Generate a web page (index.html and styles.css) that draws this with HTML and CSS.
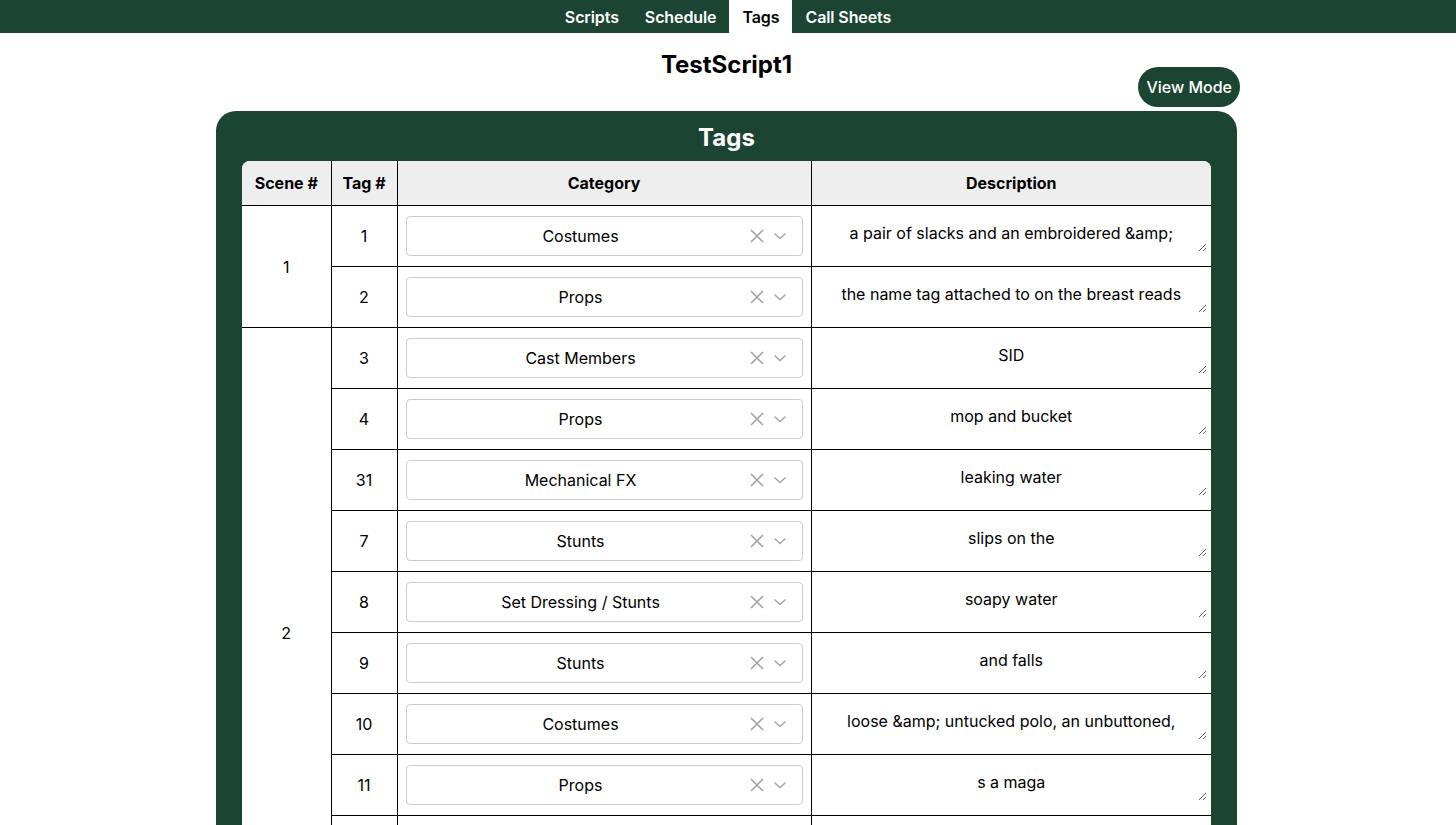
FILE: index.html
```html
<!DOCTYPE html>
<html lang="en">
<head>
<meta charset="utf-8">
<title>Tags</title>
<link rel="stylesheet" href="styles.css">
</head>
<body>
<nav class="topnav">
  <a class="tab">Scripts</a>
  <a class="tab">Schedule</a>
  <a class="tab active">Tags</a>
  <a class="tab">Call Sheets</a>
</nav>
<div class="page">
  <header class="page-head">
    <div></div>
    <h1 class="title">TestScript1</h1>
    <button class="mode-btn">View Mode</button>
  </header>
  <main class="panel">
    <h2 class="panel-title">Tags</h2>
    <div class="table-wrap">
      <table class="tags">
        <colgroup>
          <col class="c-scene"><col class="c-tag"><col class="c-cat"><col class="c-desc">
        </colgroup>
        <thead>
          <tr><th>Scene #</th><th>Tag #</th><th>Category</th><th>Description</th></tr>
        </thead>
        <tbody id="rows"></tbody>
      </table>
    </div>
  </main>
</div>
<script src="app.js"></script>
</body>
</html>
```
FILE: app.js
```js
const data = [
  {scene: "1", rows: [
    ["1", "Costumes", "a pair of slacks and an embroidered &amp;"],
    ["2", "Props", "the name tag attached to on the breast reads"]
  ]},
  {scene: "2", rows: [
    ["3", "Cast Members", "SID"],
    ["4", "Props", "mop and bucket"],
    ["31", "Mechanical FX", "leaking water"],
    ["7", "Stunts", "slips on the"],
    ["8", "Set Dressing / Stunts", "soapy water"],
    ["9", "Stunts", "and falls"],
    ["10", "Costumes", "loose &amp; untucked polo, an unbuttoned,"],
    ["11", "Props", "s a maga"],
    ["12", "Props", "cleaning cart"],
    ["13", "Set Dressing", "wet floor sign"]
  ]}
];

const xIcon = '<svg class="ic-x" width="16" height="16" viewBox="0 0 16 16"><path d="M2 2 L14 14 M14 2 L2 14" stroke="currentColor" stroke-width="1.6" fill="none"/></svg>';
const chev = '<svg class="ic-chev" width="14" height="14" viewBox="0 0 14 14"><path d="M1.5 4.5 L7 9.5 L12.5 4.5" stroke="currentColor" stroke-width="1.4" fill="none"/></svg>';

const tbody = document.getElementById("rows");
data.forEach(group => {
  group.rows.forEach((r, i) => {
    const tr = document.createElement("tr");
    let html = "";
    if (i === 0) html += `<td class="scene" rowspan="${group.rows.length}">${group.scene}</td>`;
    html += `<td class="tagno">${r[0]}</td>`;
    html += `<td class="cat"><div class="select"><div class="select-value">${r[1]}</div><div class="select-ind">${xIcon}${chev}</div></div></td>`;
    html += `<td class="desc"><textarea class="desc-input"></textarea></td>`;
    tr.innerHTML = html;
    tr.querySelector("textarea").value = r[2];
    tbody.appendChild(tr);
  });
});
```
FILE: styles.css
```css
* { box-sizing: border-box; }
html, body { margin: 0; padding: 0; background: #fff; }
body {
  font-family: Inter, "Noto Sans", "Liberation Sans", sans-serif;
  color: #000;
  font-size: 16px;
}

.topnav {
  background: #1b4433;
  height: 33px;
  display: flex;
  justify-content: center;
  align-items: stretch;
}
.tab {
  color: #fff;
  font-weight: 600;
  font-size: 16px;
  letter-spacing: -0.1px;
  padding: 0 13px;
  display: flex;
  align-items: center;
  cursor: pointer;
}
.tab.active {
  background: #fff;
  color: #000;
}

.page {
  padding-right: 3px;
}
.page-head {
  width: 1027px;
  height: 74px;
  margin: 0 auto;
  display: grid;
  grid-template-columns: 1fr auto 1fr;
}
.title {
  margin: 18px 0 0;
  font-size: 24px;
  line-height: 28px;
  font-weight: 700;
  align-self: start;
}
.mode-btn {
  justify-self: end;
  align-self: end;
  height: 40px;
  padding: 0 8px;
  border: none;
  border-radius: 20px;
  background: #1b4433;
  color: #fff;
  font-family: inherit;
  font-size: 16px;
  font-weight: 500;
}

.panel {
  width: 1021px;
  margin: 4px auto 0;
  background: #1b4433;
  border-radius: 20px;
  padding: 12px 26px 26px;
}
.panel-title {
  margin: 0 0 8px;
  text-align: center;
  color: #fff;
  font-size: 24px;
  line-height: 30px;
  font-weight: 700;
}

.table-wrap {
  border-radius: 8px 8px 0 0;
  overflow: hidden;
  background: #fff;
}
.tags {
  width: 100%;
  border-collapse: collapse;
  border-style: hidden;
  table-layout: fixed;
}
.c-scene { width: 89px; }
.c-tag { width: 66px; }
.c-cat { width: 414px; }
.c-desc { width: 400px; }

.tags th, .tags td {
  border: 1px solid #000;
  text-align: center;
  vertical-align: middle;
}
.tags th {
  background: #eeeeee;
  font-weight: 700;
  font-size: 16px;
  line-height: 20px;
  padding: 12px 4px;
}
.tags td {
  height: 61px;
  padding: 0;
  font-size: 16px;
}
.tags td.cat { padding: 10px 8px 10px; }
.select {
  height: 40px;
  border: 1px solid #cccccc;
  border-radius: 4px;
  display: flex;
  align-items: center;
  background: #fff;
}
.select-value {
  flex: 1;
  text-align: center;
  padding-left: 6px;
  white-space: nowrap;
  overflow: hidden;
}
.select-ind {
  display: flex;
  align-items: center;
  gap: 8px;
  padding: 0 15px 0 0;
  color: #a3a3a3;
}
.ic-x, .ic-chev { display: block; }

.tags td.desc { padding: 10px 4px 14px; vertical-align: top; }
.desc-input {
  display: block;
  width: 100%;
  height: 36px;
  border: none;
  outline: none;
  background: transparent;
  padding: 8px 4px 0;
  font-family: inherit;
  font-size: 16px;
  line-height: 19px;
  text-align: center;
  color: #000;
  overflow: hidden;
}
```
